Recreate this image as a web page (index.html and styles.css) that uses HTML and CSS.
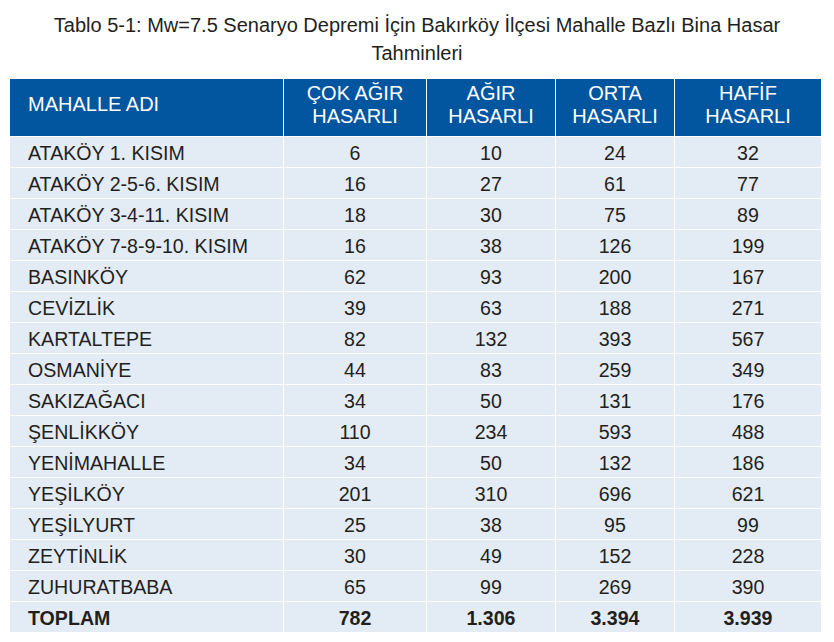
FILE: index.html
```html
<!DOCTYPE html>
<html lang="tr">
<head>
<meta charset="utf-8">
<title>Tablo 5-1</title>
<link rel="stylesheet" href="styles.css">
</head>
<body>
<div class="page">
  <h1 class="caption">Tablo 5-1: Mw=7.5 Senaryo Depremi İçin Bakırköy İlçesi Mahalle Bazlı Bina Hasar<br>Tahminleri</h1>
  <div class="table">
    <div class="row head">
      <div class="cell name">MAHALLE ADI</div>
      <div class="cell">ÇOK AĞIR<br>HASARLI</div>
      <div class="cell">AĞIR<br>HASARLI</div>
      <div class="cell">ORTA<br>HASARLI</div>
      <div class="cell">HAFİF<br>HASARLI</div>
    </div>
    <div class="row"><div class="cell name">ATAKÖY 1. KISIM</div><div class="cell">6</div><div class="cell">10</div><div class="cell">24</div><div class="cell">32</div></div>
    <div class="row"><div class="cell name">ATAKÖY 2-5-6. KISIM</div><div class="cell">16</div><div class="cell">27</div><div class="cell">61</div><div class="cell">77</div></div>
    <div class="row"><div class="cell name">ATAKÖY 3-4-11. KISIM</div><div class="cell">18</div><div class="cell">30</div><div class="cell">75</div><div class="cell">89</div></div>
    <div class="row"><div class="cell name">ATAKÖY 7-8-9-10. KISIM</div><div class="cell">16</div><div class="cell">38</div><div class="cell">126</div><div class="cell">199</div></div>
    <div class="row"><div class="cell name">BASINKÖY</div><div class="cell">62</div><div class="cell">93</div><div class="cell">200</div><div class="cell">167</div></div>
    <div class="row"><div class="cell name">CEVİZLİK</div><div class="cell">39</div><div class="cell">63</div><div class="cell">188</div><div class="cell">271</div></div>
    <div class="row"><div class="cell name">KARTALTEPE</div><div class="cell">82</div><div class="cell">132</div><div class="cell">393</div><div class="cell">567</div></div>
    <div class="row"><div class="cell name">OSMANİYE</div><div class="cell">44</div><div class="cell">83</div><div class="cell">259</div><div class="cell">349</div></div>
    <div class="row"><div class="cell name">SAKIZAĞACI</div><div class="cell">34</div><div class="cell">50</div><div class="cell">131</div><div class="cell">176</div></div>
    <div class="row"><div class="cell name">ŞENLİKKÖY</div><div class="cell">110</div><div class="cell">234</div><div class="cell">593</div><div class="cell">488</div></div>
    <div class="row"><div class="cell name">YENİMAHALLE</div><div class="cell">34</div><div class="cell">50</div><div class="cell">132</div><div class="cell">186</div></div>
    <div class="row"><div class="cell name">YEŞİLKÖY</div><div class="cell">201</div><div class="cell">310</div><div class="cell">696</div><div class="cell">621</div></div>
    <div class="row"><div class="cell name">YEŞİLYURT</div><div class="cell">25</div><div class="cell">38</div><div class="cell">95</div><div class="cell">99</div></div>
    <div class="row"><div class="cell name">ZEYTİNLİK</div><div class="cell">30</div><div class="cell">49</div><div class="cell">152</div><div class="cell">228</div></div>
    <div class="row"><div class="cell name">ZUHURATBABA</div><div class="cell">65</div><div class="cell">99</div><div class="cell">269</div><div class="cell">390</div></div>
    <div class="row total"><div class="cell name">TOPLAM</div><div class="cell">782</div><div class="cell">1.306</div><div class="cell">3.394</div><div class="cell">3.939</div></div>
  </div>
</div>
</body>
</html>
```

FILE: styles.css
```css
html, body {
  margin: 0;
  padding: 0;
  background: #ffffff;
}

.page {
  width: 834px;
  font-family: "Liberation Sans", Arial, sans-serif;
  color: #231f20;
}

.caption {
  margin: 11px 0 12px;
  font-size: 20px;
  line-height: 28px;
  font-weight: normal;
  text-align: center;
  color: #231f20;
}

.table {
  margin-left: 10px;
  width: 811px;
  display: flex;
  flex-direction: column;
  gap: 1px;
  background: #ffffff;
}

.row {
  display: grid;
  grid-template-columns: 273px 142px 128px 118px 146px;
  column-gap: 1px;
  height: 30px;
}

.cell {
  background: #e3ebf4;
  font-size: 19.6px;
  line-height: 23px;
  display: flex;
  align-items: center;
  justify-content: center;
  text-align: center;
  padding-top: 2px;
}

.cell.name {
  justify-content: flex-start;
  text-align: left;
  padding-left: 18px;
}

.head {
  height: 57px;
}

.head .cell {
  background: #02559f;
  color: #ffffff;
  font-size: 20px;
  padding-top: 0;
  padding-bottom: 5px;
  line-height: 23.5px;
}

.total .cell {
  font-weight: bold;
}
```
